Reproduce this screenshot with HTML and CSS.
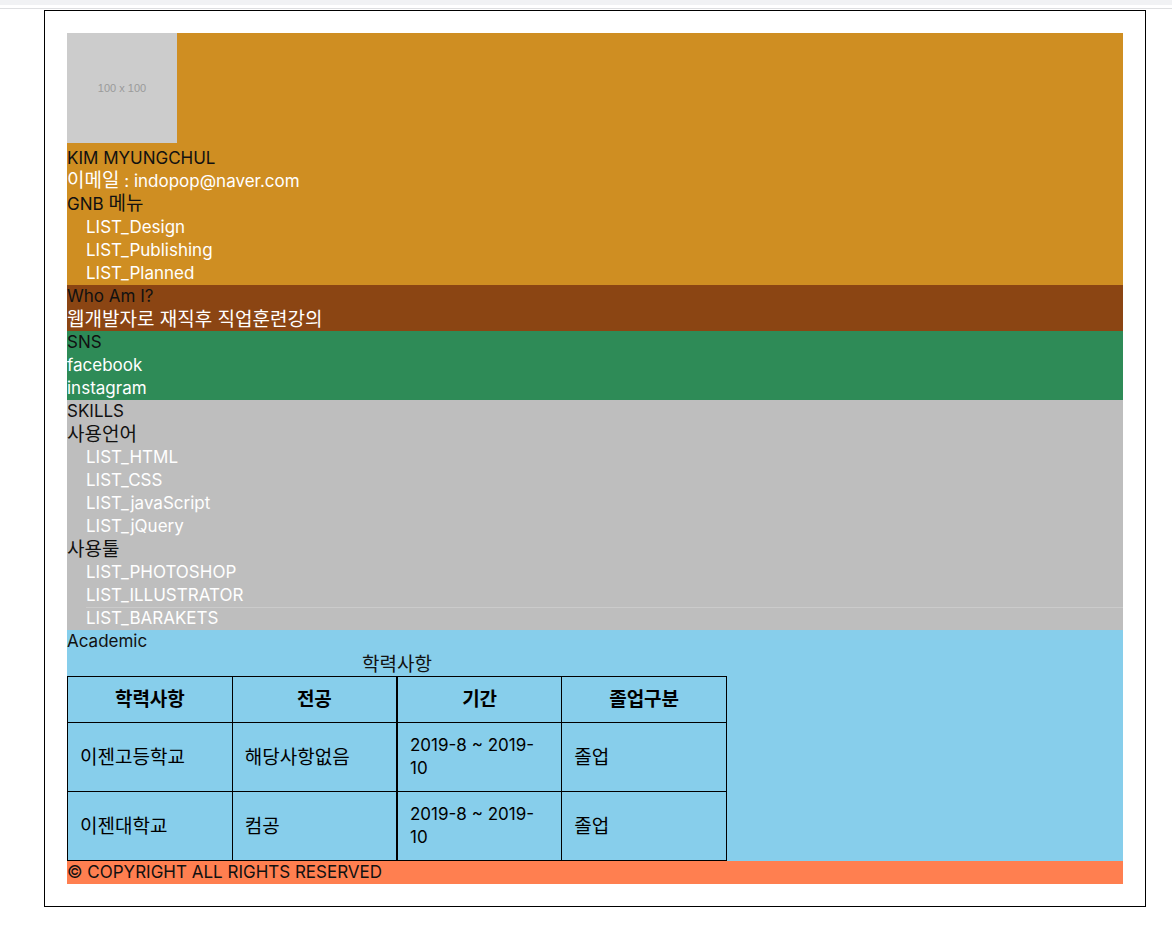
FILE: index.html
```html
<!DOCTYPE html>
<html lang="ko">
<head>
<meta charset="utf-8">
<title>KIM MYUNGCHUL</title>
<link rel="stylesheet" href="styles.css">
</head>
<body>
<div class="topband"></div>
<div class="topline"></div>
<div class="wrap">
  <header class="header">
    <div class="photo"><span>100 x 100</span></div>
    <h1 class="dark">KIM MYUNGCHUL</h1>
    <p class="light"><span class="ko">이메일</span> : indopop@naver.com</p>
    <h2 class="dark">GNB <span class="ko">메뉴</span></h2>
    <ul class="list">
      <li>LIST_Design</li>
      <li>LIST_Publishing</li>
      <li>LIST_Planned</li>
    </ul>
  </header>
  <section class="who">
    <h2 class="dark">Who Am I?</h2>
    <p class="light ko">웹개발자로 재직후 직업훈련강의</p>
  </section>
  <section class="sns">
    <h2 class="dark">SNS</h2>
    <p class="light">facebook</p>
    <p class="light">instagram</p>
  </section>
  <section class="skills">
    <h2 class="dark">SKILLS</h2>
    <h3 class="dark ko">사용언어</h3>
    <ul class="list">
      <li>LIST_HTML</li>
      <li>LIST_CSS</li>
      <li>LIST_javaScript</li>
      <li>LIST_jQuery</li>
    </ul>
    <h3 class="dark ko">사용툴</h3>
    <ul class="list">
      <li>LIST_PHOTOSHOP</li>
      <li>LIST_ILLUSTRATOR</li>
      <li class="sep">LIST_BARAKETS</li>
    </ul>
  </section>
  <section class="academic">
    <h2 class="dark">Academic</h2>
    <table class="edu">
      <caption class="ko">학력사항</caption>
      <thead>
        <tr><th class="ko">학력사항</th><th class="ko">전공</th><th class="ko c3">기간</th><th class="ko">졸업구분</th></tr>
      </thead>
      <tbody>
        <tr><td class="ko">이젠고등학교</td><td class="ko">해당사항없음</td><td class="c3">2019-8 ~ 2019-10</td><td class="ko">졸업</td></tr>
        <tr><td class="ko">이젠대학교</td><td class="ko">컴공</td><td class="c3">2019-8 ~ 2019-10</td><td class="ko">졸업</td></tr>
      </tbody>
    </table>
  </section>
  <footer class="footer">© COPYRIGHT ALL RIGHTS RESERVED</footer>
</div>
</body>
</html>
```
FILE: styles.css
```css
* { box-sizing: border-box; }
html, body { margin: 0; padding: 0; background: #fff; }
body {
  font-family: Inter, "Noto Sans CJK KR", sans-serif;
  font-size: 17px;
  line-height: 23px;
  color: #000;
}
.topband { height: 5px; background: #f1f2f4; }
.topline { height: 1px; margin-top: 3px; background: #dedfe1; }
.wrap {
  margin: 1px 26px 0 44px;
  border: 1px solid #000;
  padding: 22px;
}
h1, h2, h3, p, ul { margin: 0; padding: 0; font-size: 17px; font-weight: normal; }
.ko, h2 .ko, h3.ko, p.ko { font-size: 19px; }
span.ko { line-height: 1; }
.dark { color: #111; }
.light { color: #fff; }
.list { list-style: none; padding-left: 19px; color: #fff; }
.list li.sep { box-shadow: inset 0 1px 0 #cbcbcb; }
.header { background: #cf8e22; }
.photo {
  width: 110px; height: 110px; margin-bottom: 4px;
  background: #cccccc;
  display: flex; align-items: center; justify-content: center;
}
.photo span {
  font-family: "Liberation Sans", sans-serif;
  font-size: 11px; color: #9a9a9a; line-height: 1;
}
.who { background: #8b4513; }
.sns { background: #2e8b57; }
.skills { background: #bebebe; }
.academic { background: #87ceeb; }
.edu {
  width: 660px;
  border-collapse: collapse;
}
.edu caption { line-height: 23px; color: #111; }
.edu th, .edu td {
  border: 1px solid #000;
  padding: 11px 12px;
  text-align: left;
  width: 25%;
}
.edu th { text-align: center; font-weight: bold; }
.edu .c3 { border-left-width: 2px; }
.footer { background: #ff7f50; color: #111; }
```
